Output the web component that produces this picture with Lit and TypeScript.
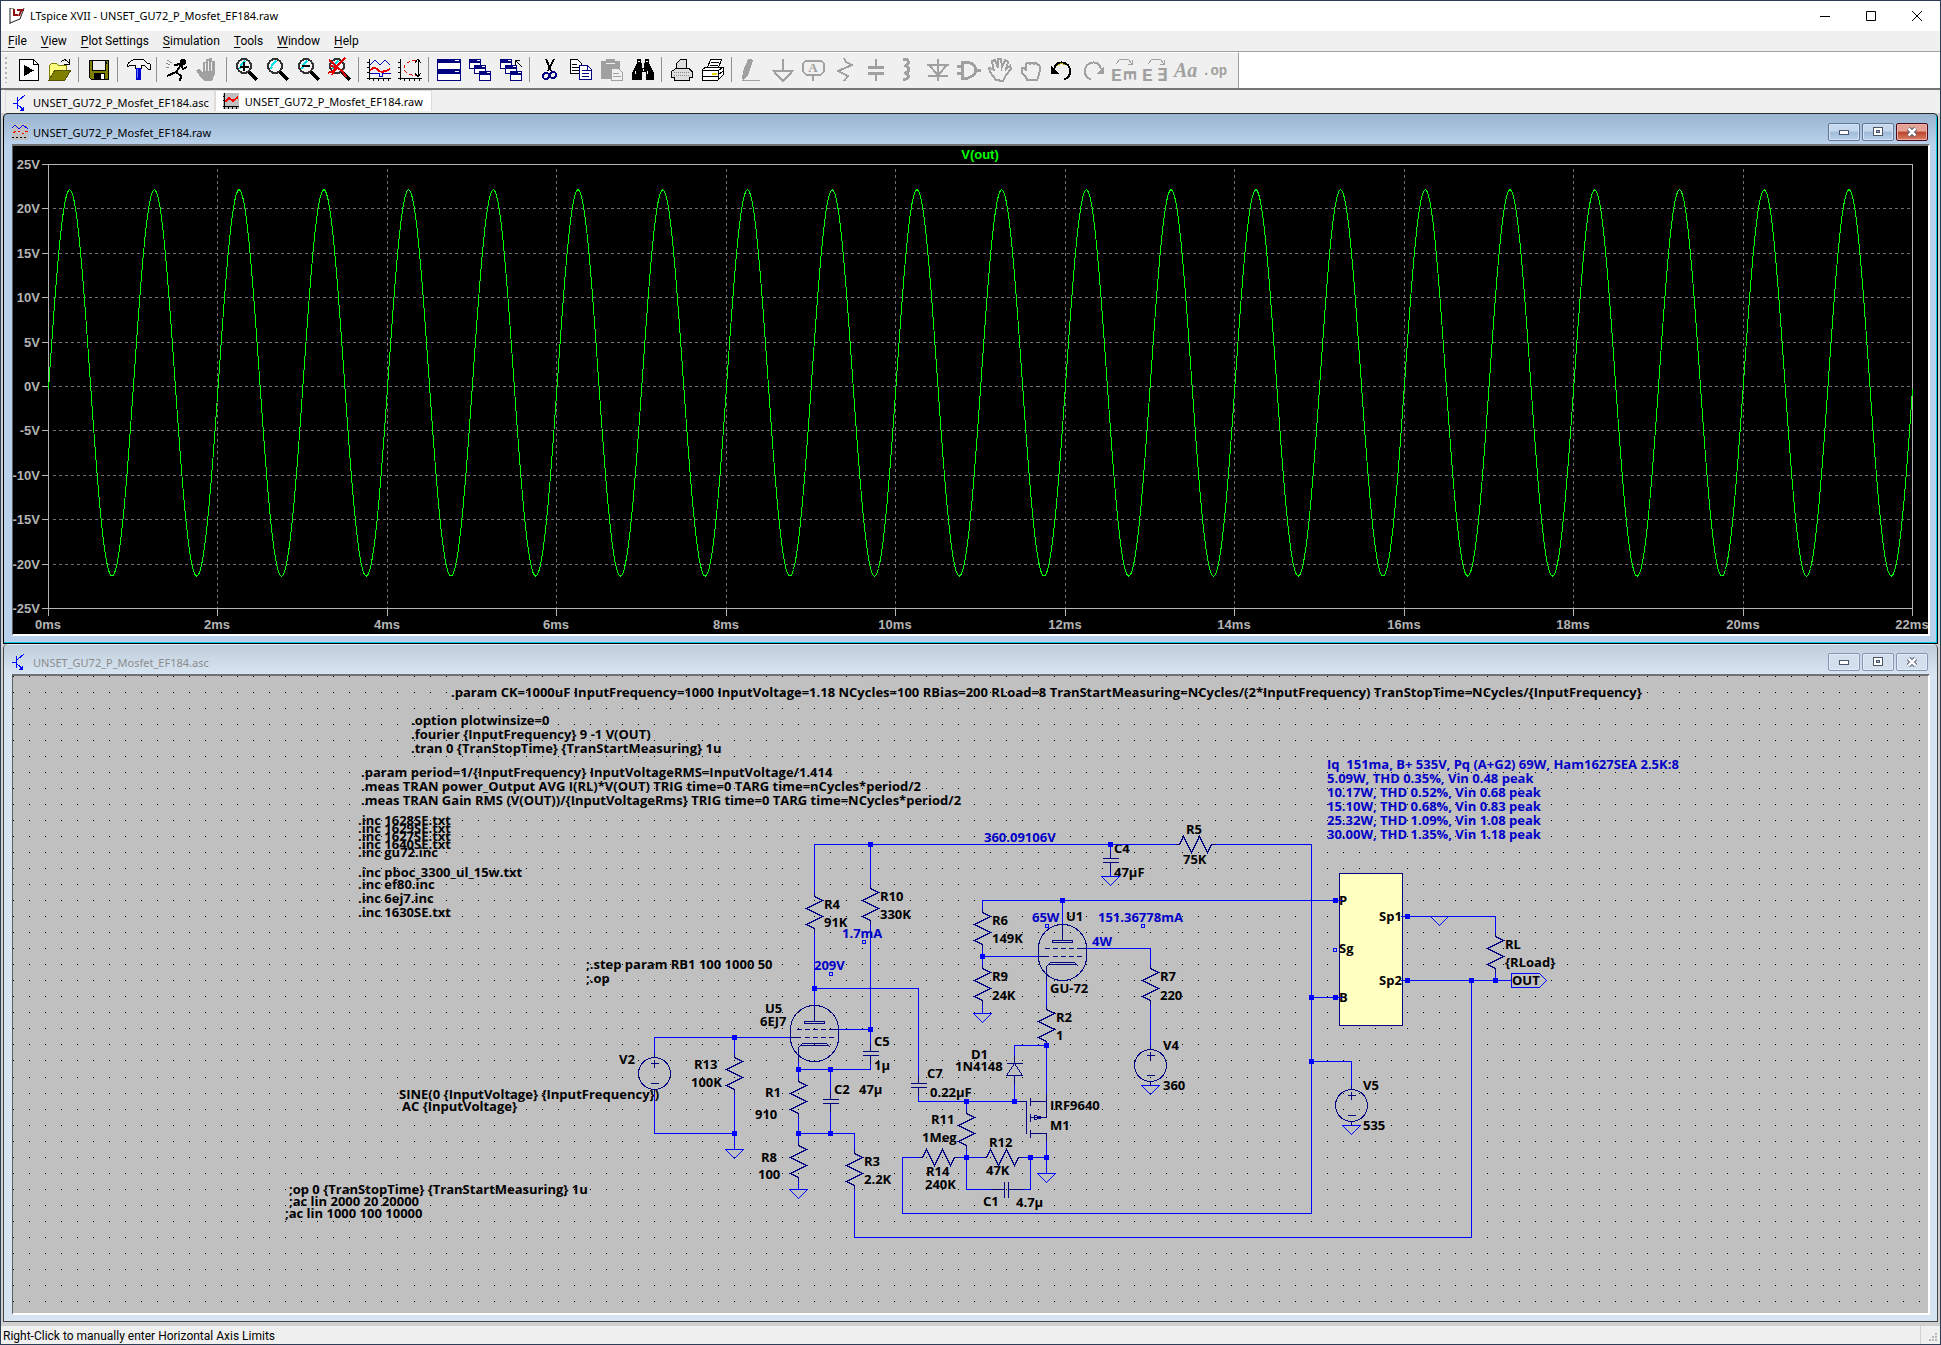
import { LitElement, html, svg, css, nothing, TemplateResult } from "lit";
import { customElement, property, state } from "lit/decorators.js";
import { classMap } from "lit/directives/class-map.js";

type Draw = TemplateResult;

/* ------------------------------------------------------------------ */
/* Icons (24 x 24 grid)                                                */
/* ------------------------------------------------------------------ */

const lens = (inner: Draw) => svg`
  <circle cx="9" cy="8" r="7" fill="#f4f4f4" stroke="#333" stroke-width="2"/>
  <path d="M5 8 L10 3 M4 11 L6 9" stroke="#00e0e8" stroke-width="2"/>
  <path d="M14 14 L22 22" stroke="#000" stroke-width="4"/>${inner}`;

const cascade = svg`
  <path d="M1.5 1.5h11v9h-11z M6.5 7.5h11v8h-11z M11.5 13.5h11v9h-11z" fill="#fff" stroke="#000080"/>
  <path d="M1 1h12v4h-12z M6 7h12v4h-12z M11 13h12v4h-12z" fill="#000080"/>
  <path d="M9 2h3v1h-3z M14 8h3v1h-3z M19 14h3v1h-3z" fill="#fff"/>`;

const G = "#a0a0a0";
const gray = (d: string, w = 2) => svg`<path d=${d} fill="none" stroke=${G} stroke-width=${w}/>`;

const ICONS: Record<string, Draw> = {
  run: svg`<path d="M2.500 1.500h14l5 5v16h-19z" fill="#fff" stroke="#000"/><path d="M16.500 1.500v5h5" fill="none" stroke="#000"/><path d="M7 7v11l10-5.500z"/>`,
  open: svg`<path d="M1.500 21.500v-14l2-2h5l2 2h8v4" fill="#ffff80" stroke="#808000"/><path d="M1 22L7 12H23L17 22z" fill="#808000" stroke="#555500"/><path d="M13 4q4-5 8 1M21 1v5h-5" fill="none" stroke="#000"/>`,
  save: svg`<path d="M2.500 2.500h19v19h-17l-2-2z" fill="#808000" stroke="#000"/><path d="M6 3h12v9H6z" fill="#ececec"/><path d="M5.500 3v9.500h13V3M19.500 4v2" fill="none" stroke="#000"/><path d="M7 15h11v7H7z"/><path d="M14 16h3v5h-3z" fill="#fff"/>`,
  hammer: svg`<path d="M1 7q4-6 11-6 7 0 9 4l3 1v5h-2l-3-3q-2-1-4 0v2H9V7H7Q4 7 1 9z" fill="#f4f4f4" stroke="#000"/><path d="M10 10h5v12h-5z" fill="#0000d0"/><path d="M11 11v9" stroke="#5080ff"/>`,
  runner: svg`<path d="M2 2l5 3M1 5l4 2M1 9l3 1" stroke="#888"/><circle cx="18" cy="4" r="3"/><path d="M9 7l7-1 2 5 4-2M16 7l-5 7-9 4M11 14l5 4-1 5" fill="none" stroke="#000" stroke-width="2"/>`,
  hand: svg`<path d="M7 14V5a1 1 0 0 1 3 0V2a1 1 0 0 1 3 0V1a1 1 0 0 1 3 1v2a1 1 0 0 1 3 1v11l-3 7H8l-5-6-3-5 3-1z" fill=${G}/><path d="M9.500 5v8M12.500 3v10M15.500 4v9" stroke="#f0f0f0"/>`,
  zin: lens(svg`<path d="M9 4v9M4.500 8.500h9" stroke="#000" stroke-width="2"/>`),
  zpan: lens(svg``),
  zout: lens(svg`<path d="M5 8h8" stroke="#000" stroke-width="2"/>`),
  zfit: lens(svg`<path d="M1 2l4 3 4 4 6 5 3 5M17 0L9 8 5 13 0 15M9 9L4 17M2 8l6 1" fill="none" stroke="#e00000" stroke-width="2"/>`),
  plot: svg`<path d="M2.500 1v21M0 4.500h2M0 9.500h2M0 14.500h2M0 20.500h24M6.500 20v3M11.500 20v3M16.500 20v3M21.500 20v3" stroke="#000"/><path d="M3 7l5-5 5 5 5-5 5 5M3 15h9v3h3v-3h9" fill="none" stroke="#0000c0"/><path d="M3 12q5-4 8 0t12-1" fill="none" stroke="#f00000" stroke-width="2"/>`,
  fft: svg`<path d="M2.500 1v21M0 4.500h2M0 9.500h2M0 14.500h2M0 20.500h24M6.500 20v3M11.500 20v3M16.500 20v3M21.500 20v3M20.500 2v17M17 5l3-4 3 4M17 15l3 4 3-4" fill="none" stroke="#000"/><path d="M18 2Q6 4 6 10T18 18" fill="none" stroke="#f00000" stroke-dasharray="4 2"/>`,
  tile: svg`<path d="M.5 1.500h23v21h-23z" fill="#fff" stroke="#000080"/><path d="M0 1h24v4H0zM0 11h24v5H0z" fill="#000080"/><path d="M18 2h4v1h-4zM18 13h4v1h-4z" fill="#fff"/>`,
  cascade,
  closeall: svg`${cascade}<path d="M16 2.500h5M16.500 2v5M16 2l7 7" stroke="#000" stroke-width="1"/>`,
  cut: svg`<path d="M8 1l5 12M16 1L10 13" stroke="#000" stroke-width="2"/><circle cx="8" cy="18" r="3" fill="none" stroke="#000080" stroke-width="2"/><circle cx="15" cy="17" r="3" fill="none" stroke="#000080" stroke-width="2"/>`,
  copy: svg`<path d="M1.500 1.500h7l4 4v10h-11z" fill="#fff" stroke="#000"/><path d="M3 6h5M3 9h7M3 12h7" stroke="#000"/><path d="M10.500 7.500h8l4 4v10h-12z" fill="#fff" stroke="#000080"/><path d="M13 12h5M13 15h7M13 18h7M18.500 8v4h4" fill="none" stroke="#000080"/>`,
  paste: svg`<path d="M1 3h19v18H1zM6 1h9v3H6z" fill=${G}/><path d="M6 5h9" stroke="#f0f0f0"/><path d="M11.500 10.500h7l4 4v8h-11z" fill="#f0f0f0" stroke=${G}/><path d="M13 15h6M13 18h8" stroke=${G}/>`,
  find: svg`<path d="M6 1h4v4h1v5h2V5h1V1h4v4l5 10v7h-8v-8h-4v8H1v-7L6 5z"/><path d="M7 3h2M15 3h2M4 13v3M12 11v2M16 13v3" stroke="#fff"/>`,
  print: svg`<path d="M6.500 11V5.500l4-4h6V11" fill="#ddd" stroke="#000"/><path d="M6 10.500h13l3 3v6h-3v2.500H4V19.500H1.500v-6z" fill="#ddd" stroke="#000"/><path d="M4 14h16M4 17h16" stroke="#888" stroke-dasharray="1 1"/>`,
  setup: svg`<path d="M6 10L10 1h11l-4 9" fill="#fff" stroke="#000"/><path d="M10 4h8M9 7h8" stroke="#000"/><path d="M1 12l4-3h17v8l-5 5H1z" fill="#fff" stroke="#000"/><path d="M1 12.500h16l5-3M17 13v9M1 18.500h16M17 17l5-4" fill="none" stroke="#000"/><path d="M11 16h5" stroke="#e8d800" stroke-width="2"/>`,
  pencil: svg`<path d="M8 1h3l2 2-5 14-5 5-1-1 1-8z" fill=${G}/>${gray("M2 22h18", 1)}`,
  ground: gray("M12 1v12M2 12.500h20L12 23z"),
  label: svg`${gray("M4 2.500h15l3 3v8l-3 3H4l-3-3v-8zM11 17v6")}<text x="11" y="14" text-anchor="middle" font-family="Liberation Serif, serif" font-weight="700" font-size="13" fill=${G}>A</text>`,
  res: gray("M11 0l2 4 6 3-14 6 10 5-4 5"),
  cap: svg`${gray("M12 1v8M12 15v8")}${gray("M4 9.500h16M4 15.500h16", 3)}`,
  ind: gray("M8 1h3q5 3 0 7q6 3 0 7q5 4 0 6H8", 3),
  diode: gray("M12 1v22M1 6.500h22M2 6l10 11L22 6M2 18h20"),
  gate: gray("M0 8h4M0 15h4M18 12h6M5 4h6q8 3 8 8t-8 8H5z", 3),
  drag: gray("M8 22L2 14l-1-4 4 1 1 2L4 3l3-1 3 8V1h3l1 8 3-7 3 2-2 7 4-3 1 3-5 6-3 6z"),
  move: gray("M8 22l-1-3-4-4v-5l3 0 1 3V6q2-3 4 0 2-3 4 0 2-2 4 1 2 0 2 4l-1 6-2 5z"),
  undo: svg`<path d="M4 11Q6 4 12 4.500q8 1 8 9 0 6-6 8" fill="none" stroke="#000" stroke-width="2"/><path d="M7 8q4-4 8-1" fill="none" stroke="#b0a800"/><path d="M1 8v8h8z"/>`,
  redo: svg`<path d="M20 11Q18 4 12 4.500q-8 1-8 9 0 6 6 8" fill="none" stroke=${G} stroke-width="2"/><path d="M23 8v8h-8z" fill=${G}/>`,
  rotate: svg`${gray("M4 6l4-5h8l4 5M20 2v4h-4", 1)}<text x="-1" y="23" font-family="Liberation Mono, monospace" font-weight="700" font-size="18" fill=${G}>E</text><text transform="translate(12 12) rotate(90)" x="0" y="0" font-family="Liberation Mono, monospace" font-weight="700" font-size="18" fill=${G}>E</text>`,
  mirror: svg`${gray("M5 6l4-5h8l4 5M21 2v4h-4", 1)}<text x="-1" y="23" font-family="Liberation Mono, monospace" font-weight="700" font-size="18" fill=${G}>E</text><text x="14" y="23" font-family="Liberation Mono, monospace" font-weight="700" font-size="18" fill=${G}>∃</text>`,
  text: svg`<text x="0" y="19" font-family="Liberation Serif, serif" font-weight="700" font-style="italic" font-size="20" fill=${G}>Aa</text>`,
  op: svg`<text x="-3" y="17" font-family="Liberation Mono, monospace" font-weight="700" font-size="14" fill=${G}>.op</text>`,
};

const TRANSISTOR = svg`<path d="M0 8h4M4.500 2v12M5 6l7-6M5 10l6 5" fill="none" stroke="#0000ff" stroke-width="1"/><path d="M11 11v5H6z" fill="#0000ff"/>`;
const TRACE = svg`<path d="M0 0h16v16H0z" fill="#c0c0c0"/><path d="M1.500 0v16M0 13.500h16M5.500 13v3M9.500 13v3M13.500 13v3M0 3.500h2M0 7.500h2" stroke="#000"/><path d="M2 9l4-4 4 3 5-4" fill="none" stroke="#ff0000" stroke-width="2"/>`;
const WAVES = svg`<path d="M0 0h16v16H0z" fill="#c0c0c0"/><path d="M0 4l3-3 4 4 4-4 5 4" fill="none" stroke="#0000ff"/><path d="M1 9l3-2M6 7h2M10 9h2M13 7h3" stroke="#ff0000"/><path d="M0 13.500h16" stroke="#000" stroke-dasharray="2 2"/>`;

/* ------------------------------------------------------------------ */
/* Waveform                                                            */
/* ------------------------------------------------------------------ */

@customElement("wave-plot")
class WavePlot extends LitElement {
  static styles = css`
    :host { display: block; flex: 1; min-width: 0; min-height: 0; background: #000; overflow: hidden; }
    svg { display: block; width: 100%; height: 100%; }
    text { font: bold 13px "Liberation Sans", Arial, sans-serif; fill: #b4b4b4; }
    .title { fill: #00ff00; }
    .axis { fill: none; stroke: #b4b4b4; shape-rendering: crispEdges; }
    .grid { fill: none; stroke: #707070; stroke-dasharray: 3 3; shape-rendering: crispEdges; }
    .trace { fill: none; stroke: #00ff00; shape-rendering: crispEdges; }
  `;
  @state() private w = 1915;
  @state() private h = 488;
  private ro?: ResizeObserver;

  connectedCallback() {
    super.connectedCallback();
    this.ro = new ResizeObserver(([e]) => {
      this.w = Math.round(e.contentRect.width);
      this.h = Math.round(e.contentRect.height);
    });
    this.ro.observe(this);
  }
  disconnectedCallback() {
    super.disconnectedCallback();
    this.ro?.disconnect();
  }

  render() {
    const left = 35, top = 18, right = this.w - 16, bottom = this.h - 26;
    const X = (ms: number) => left + ((right - left) * ms) / 22;
    const Y = (v: number) => top + ((bottom - top) * (25 - v)) / 50;
    const volts = [25, 20, 15, 10, 5, 0, -5, -10, -15, -20, -25];
    const times = Array.from({ length: 12 }, (_, i) => i * 2);
    let d = "";
    for (let x = left; x <= right; x++) {
      const t = ((x - left) / (right - left)) * 22 * 2 * Math.PI;
      d += `${d ? "L" : "M"}${x} ${Y(21.75 * Math.sin(t) + 0.05 - 0.35 * Math.cos(2 * t)).toFixed(1)}`;
    }
    const r = Math.round;
    return html`<svg role="img" aria-label="V(out)">
      <text class="title" x=${r((left + right) / 2)} y="13" text-anchor="middle">V(out)</text>
      <g transform="translate(.5 .5)">
        <path class="grid" d=${volts.slice(1, -1).map((v) => `M${left + 4} ${r(Y(v))}H${right}`).join("") +
          times.slice(1, -1).map((t) => `M${r(X(t))} ${top + 4}V${bottom}`).join("")} />
        <path class="axis" d=${`M${left} ${top}H${right}V${bottom}H${left}Z` +
          volts.map((v) => `M${left - 7} ${r(Y(v))}h7`).join("") +
          times.map((t) => `M${r(X(t))} ${bottom}v7`).join("")} />
        <path class="trace" d=${d} />
      </g>
      ${volts.map((v) => svg`<text x=${left - 8} y=${r(Y(v)) + 5} text-anchor="end">${v}V</text>`)}
      ${times.map((t) => svg`<text x=${r(X(t))} y=${bottom + 21} text-anchor="middle">${t}ms</text>`)}
    </svg>`;
  }
}

/* ------------------------------------------------------------------ */
/* Schematic                                                           */
/* ------------------------------------------------------------------ */

const WIRES = [
  "M814 896V844H1179", "M1211 844H1311V1213H902V1157H922", "M870 844V888", "M870 920V1051",
  "M814 928V1005", "M814 988H918V1083", "M654 1057V1037H790", "M654 1089V1133H734", "M734 1037V1057", "M734 1089V1149",
  "M838 1029H870", "M870 1055V1069H798", "M798 1060V1081", "M830 1069V1099", "M830 1103V1133",
  "M798 1113V1145", "M798 1133H854V1153", "M798 1177V1189", "M854 1185V1237H1471V980",
  "M918 1087V1101H1026", "M966 1101V1113", "M966 1145V1189H1004", "M954 1157H986", "M1018 1157H1046", "M1030 1157V1189H1008",
  "M1046 1133V1173", "M1046 1117V1041", "M1014 1063V1045H1046", "M1014 1075V1101", "M1046 979V1009",
  "M982 912V900H1335", "M1062 900V924", "M982 944V968", "M982 956H1038", "M982 1000V1013",
  "M1086 948H1150V968", "M1150 1000V1049", "M1110 844V858", "M1110 862V876",
  "M1311 997H1342", "M1311 1061H1351V1089", "M1335 900H1342",
  "M1400 916H1495V936", "M1400 980H1511", "M1495 968V980",
  "M1511 973H1539L1546 980L1539 987H1511Z",
].join("");

const JUNCTIONS: [number, number][] = [
  [870, 844], [814, 988], [870, 1029], [734, 1037], [734, 1133], [798, 1069], [830, 1069], [798, 1133], [830, 1133],
  [966, 1101], [1014, 1101], [966, 1157], [1030, 1157], [1046, 1157], [1046, 1045], [982, 956], [1062, 900], [1110, 844],
  [1311, 997], [1335, 997], [1311, 1061], [1335, 900], [1407, 916], [1407, 980], [1471, 980], [1495, 980],
];
const PROBES: [number, number][] = [[862, 940], [829, 972], [1045, 924], [1141, 924], [1333, 948]];
const GROUNDS: [number, number][] = [
  [734, 1149], [798, 1189], [982, 1013], [1046, 1173], [1110, 876], [1150, 1085], [1351, 1125], [1439, 916],
];
const RES_V: [number, number][] = [
  [814, 896], [870, 888], [734, 1057], [798, 1081], [798, 1145], [854, 1153], [966, 1113], [982, 912], [982, 968],
  [1046, 1009], [1150, 968], [1495, 936],
];
const RES_H: [number, number][] = [[1179, 844], [922, 1157], [986, 1157]];
const CAP_V: [number, number][] = [[870, 1051], [830, 1099], [918, 1083], [1110, 858]];
const SOURCES: [number, number][] = [[654, 1073], [1150, 1065], [1351, 1105]];
const TUBES: [number, number][] = [[814, 1033], [1062, 952]];

const NOTES: [number, number, string][] = [
  [451, 697, ".param CK=1000uF InputFrequency=1000 InputVoltage=1.18 NCycles=100 RBias=200 RLoad=8 TranStartMeasuring=NCycles/(2*InputFrequency) TranStopTime=NCycles/{InputFrequency}"],
  [411, 725, ".option plotwinsize=0"], [411, 739, ".fourier {InputFrequency} 9 -1 V(OUT)"],
  [411, 753, ".tran 0 {TranStopTime} {TranStartMeasuring} 1u"],
  [361, 777, ".param period=1/{InputFrequency} InputVoltageRMS=InputVoltage/1.414"],
  [361, 791, ".meas TRAN power_Output AVG I(RL)*V(OUT) TRIG time=0 TARG time=nCycles*period/2"],
  [361, 805, ".meas TRAN Gain RMS (V(OUT))/{InputVoltageRms} TRIG time=0 TARG time=NCycles*period/2"],
  [358, 825, ".inc 1628SE.txt"], [358, 833, ".inc 1629SE.txt"], [358, 841, ".inc 1627SE.txt"], [358, 849, ".inc 1640SE.txt"],
  [358, 857, ".inc gu72.inc"], [358, 877, ".inc pboc_3300_ul_15w.txt"], [358, 889, ".inc ef80.inc"],
  [358, 903, ".inc 6ej7.inc"], [358, 917, ".inc 1630SE.txt"],
  [586, 969, ";.step param RB1 100 1000 50"], [586, 983, ";.op"],
  [399, 1099, "SINE(0 {InputVoltage} {InputFrequency})"], [402, 1111, "AC {InputVoltage}"],
  [289, 1194, ";op 0 {TranStopTime} {TranStartMeasuring} 1u"], [289, 1206, ";ac lin 2000 20 20000"], [285, 1218, ";ac lin 1000 100 10000"],
  [765, 1013, "U5"], [760, 1026, "6EJ7"], [619, 1064, "V2"], [694, 1069, "R13"], [691, 1087, "100K"],
  [824, 909, "R4"], [824, 927, "91K"], [880, 901, "R10"], [880, 919, "330K"], [874, 1046, "C5"], [874, 1070, "1µ"],
  [834, 1094, "C2"], [859, 1094, "47µ"], [765, 1097, "R1"], [755, 1119, "910"], [761, 1162, "R8"], [758, 1179, "100"],
  [864, 1166, "R3"], [864, 1184, "2.2K"], [927, 1078, "C7"], [930, 1097, "0.22µF"], [971, 1059, "D1"], [955, 1071, "1N4148"],
  [931, 1124, "R11"], [922, 1142, "1Meg"], [926, 1176, "R14"], [925, 1189, "240K"], [983, 1206, "C1"], [1016, 1207, "4.7µ"],
  [1186, 834, "R5"], [1183, 864, "75K"], [1114, 853, "C4"], [1114, 877, "47µF"], [992, 925, "R6"], [992, 943, "149K"],
  [1066, 921, "U1"], [992, 981, "R9"], [992, 1000, "24K"], [1050, 993, "GU-72"], [1160, 981, "R7"], [1160, 1000, "220"],
  [1056, 1022, "R2"], [1056, 1040, "1"], [1163, 1050, "V4"], [1163, 1090, "360"], [1050, 1110, "IRF9640"], [1050, 1130, "M1"],
  [989, 1147, "R12"], [986, 1175, "47K"], [1505, 949, "RL"], [1505, 967, "{RLoad}"], [1363, 1090, "V5"], [1363, 1130, "535"],
  [1339, 905, "P"], [1339, 953, "Sg"], [1339, 1002, "B"], [1379, 921, "Sp1"], [1379, 985, "Sp2"], [1512, 985, "OUT"],
];
const READOUTS: [number, number, string][] = [
  [842, 938, "1.7mA"], [814, 970, "209V"], [984, 842, "360.09106V"], [1032, 922, "65W"], [1098, 922, "151.36778mA"], [1092, 946, "4W"],
  [1327, 769, "Iq\u00a0 151ma, B+ 535V, Pq (A+G2) 69W, Ham1627SEA 2.5K:8"],
  [1327, 783, "5.09W, THD 0.35%, Vin 0.48 peak"], [1327, 797, "10.17W, THD 0.52%, Vin 0.68 peak"],
  [1327, 811, "15.10W, THD 0.68%, Vin 0.83 peak"], [1327, 825, "25.32W, THD 1.09%, Vin 1.08 peak"],
  [1327, 839, "30.00W, THD 1.35%, Vin 1.18 peak"],
];

const GRID_DOTS = (() => {
  let d = "";
  for (let j = 0; j < 80; j++)
    for (let i = 0; i < 200; i++) d += `M${13 + Math.round(i * 16.02)} ${676 + Math.round(j * 16.02)}h1v1h-1z`;
  return d;
})();

const SYMBOLS = [
  ...RES_V.map(([x, y]) => `M${x} ${y - 4}v4l8 4l-16 8l16 8l-16 8l8 4v4`),
  ...RES_H.map(([x, y]) => `M${x - 4} ${y}h4l4 -8l8 16l8 -16l8 16l4 -8h4`),
  ...CAP_V.map(([x, y]) => `M${x - 8} ${y}h16M${x - 8} ${y + 4}h16M${x} ${y}v-8M${x} ${y + 4}v8`),
  ...SOURCES.map(([x, y]) => `M${x - 4} ${y - 10}h8M${x} ${y - 14}v8M${x - 4} ${y + 10}h8M${x} ${y - 20}v4M${x} ${y + 16}v4`),
  ...TUBES.map(([x, y]) =>
    `M${x} ${y - 28}v16M${x - 10} ${y - 12}h20v2h-20zM${x - 16} ${y + 28}v-14l4 -4h24l4 4M${x - 15} ${y + 12}h29` +
    [-18, -10, -2, 6].map((o) => `M${x + o} ${y - 4}h5`).join("") + `M${x + 14} ${y - 4}h10` +
    `M${x - 24} ${y + 4}h10` + [-10, -2, 6, 14].map((o) => `M${x + o} ${y + 4}h5`).join("")),
  "M1004 1181v16M1008 1181v16M990 1189h14M1008 1189h14",
  "M1006 1063h16M1014 1063l8 12h-16zM1014 1055v8M1014 1075v8",
  "M1018 1101h8v32M1030 1097v8M1030 1113v8M1030 1129v8M1030 1101h16v-8M1030 1117h16v-16M1030 1133h16v8M1034 1115v4M1034 1115l9 2l-9 2",
].join("");

@customElement("schematic-sheet")
class SchematicSheet extends LitElement {
  static styles = css`
    :host { display: block; flex: 1; min-width: 0; min-height: 0; background: #c0c0c0; overflow: hidden; }
    svg { display: block; width: 100%; height: 100%; }
    text { font: bold 13px "Open Sans", "Noto Sans", sans-serif; fill: #000; }
    .readout { fill: #0000c8; }
    .line { fill: none; shape-rendering: crispEdges; }
    .wire { stroke: #0000ff; }
    .part { stroke: #000080; }
    .body { fill: #ffffc0; stroke: #000080; shape-rendering: crispEdges; }
    .node { fill: #0000ff; shape-rendering: crispEdges; }
  `;
  render() {
    const label = (c: string) => ([x, y, s]: [number, number, string]) => svg`<text class=${c} x=${x} y=${y}>${s}</text>`;
    return html`<svg role="img" aria-label="Amplifier schematic">
      <g transform="translate(-13 -676)">
        <path d=${GRID_DOTS} shape-rendering="crispEdges" />
        <g transform="translate(.5 .5)">
          <rect class="body" x="1339" y="873" width="63" height="152" />
        </g>
        ${NOTES.map(label("note"))}
        <g transform="translate(.5 .5)">
          <path class="line wire" d=${WIRES} />
          <path class="line wire" d=${GROUNDS.map(([x, y]) => `M${x - 9} ${y}h18l-9 9z`).join("")} />
          <path class="line part" d=${SYMBOLS} />
          ${SOURCES.map(([x, y]) => svg`<circle class="line part" cx=${x} cy=${y} r="16"/>`)}
          ${TUBES.map(([x, y]) => svg`<rect class="line part" x=${x - 24} y=${y - 28} width="48" height="56" rx="24"/>`)}
          <path class="line wire" d=${PROBES.map(([x, y]) => `M${x} ${y}h3v3h-3z`).join("")} />
        </g>
        <path class="node" d=${JUNCTIONS.map(([x, y]) => `M${x - 2} ${y - 2}h5v5h-5z`).join("")} />
        ${READOUTS.map(label("readout"))}
      </g>
    </svg>`;
  }
}

/* ------------------------------------------------------------------ */
/* Document window                                                     */
/* ------------------------------------------------------------------ */

@customElement("doc-window")
class DocWindow extends LitElement {
  @property() caption = "";
  @property({ type: Boolean, reflect: true }) active = false;
  @property({ attribute: false }) icon: Draw = svg``;
  static styles = css`
    :host {
      display: flex; flex-direction: column; min-height: 0; box-sizing: border-box;
      padding: 0 7px 6px 8px; border: 1px solid #444; border-top: 0; border-radius: 5px 5px 0 0;
      background: linear-gradient(#bfcddb, #d7e4f2 30px);
      box-shadow: inset 0 1px #e8eef4;
    }
    :host([active]) {
      border-color: #000; border-top: 1px solid #2a2a2a;
      background: linear-gradient(#99b4d1, #b9d1ea 30px);
      box-shadow: inset -1px -1px #00c8e8; padding: 0 7px 7px 8px;
    }
    .bar { flex: none; height: 30px; display: flex; align-items: center; gap: 5px; box-sizing: border-box; padding: 6px 2px 0 0; }
    .icon { width: 16px; height: 16px; flex: none; shape-rendering: crispEdges; }
    .caption { flex: 1; margin: 0; font: 400 11px "Noto Sans", "Open Sans", sans-serif; color: #8c8c8c; }
    :host([active]) .caption { color: #000; }
    .buttons { display: flex; gap: 2px; }
    button {
      width: 32px; height: 18px; padding: 0; display: grid; place-items: center;
      border: 1px solid #8496b4; border-radius: 2px; background: #d3dfec; box-shadow: inset 0 0 0 1px #e4ecf6;
    }
    :host([active]) button { border-color: #5f7694; background: linear-gradient(#c5d8ee 45%, #9fbad8 50%, #b8d2ec); box-shadow: inset 0 0 0 1px #d4e4f4; }
    :host([active]) .close { border-color: #4a0a1c; background: linear-gradient(#e4a296 45%, #bc4028 50%, #d88068); box-shadow: inset 0 0 0 1px #eab0a4; }
    .frame { flex: 1; min-height: 0; display: flex; border: 2px solid #fff; border-top-color: #707070; border-left: 1px solid #606060; }
    ::slotted(*) { flex: 1; min-width: 0; }
  `;
  render() {
    return html`
      <div class="bar">
        <svg class="icon" viewBox="0 0 16 16" aria-hidden="true">${this.icon}</svg>
        <h2 class="caption">${this.caption}</h2>
        <div class="buttons">
          <button aria-label="Minimize"><svg width="12" height="8"><rect x="1.500" y="2.500" width="9" height="4" fill="#fff" stroke="#4a5568"/></svg></button>
          <button aria-label="Restore"><svg width="12" height="10"><rect x="1.500" y=".5" width="9" height="8" fill="#fff" stroke="#4a5568"/><rect x="4.500" y="3.500" width="3" height="2" fill="#9fb4cc" stroke="#4a5568"/></svg></button>
          <button class="close" aria-label="Close"><svg width="12" height="10"><path d="M2.500 1.500l7 7M9.500 1.500l-7 7" stroke="#4a5568" stroke-width="4.500"/><path d="M2.500 1.500l7 7M9.500 1.500l-7 7" stroke="#fff" stroke-width="2.500"/></svg></button>
        </div>
      </div>
      <div class="frame"><slot></slot></div>`;
  }
}

/* ------------------------------------------------------------------ */
/* Application shell                                                   */
/* ------------------------------------------------------------------ */

const TOOLS: [string, string, boolean?][][] = [
  [["run", "Run"], ["open", "Open"]],
  [["save", "Save"]],
  [["hammer", "Control Panel"]],
  [["runner", "Run simulation"], ["hand", "Halt", true]],
  [["zin", "Zoom in"], ["zpan", "Pan"], ["zout", "Zoom out"], ["zfit", "Zoom to fit"]],
  [["plot", "Autorange"], ["fft", "FFT"]],
  [["tile", "Tile windows"], ["cascade", "Cascade windows"], ["closeall", "Close all"]],
  [["cut", "Cut"], ["copy", "Copy"], ["paste", "Paste", true], ["find", "Find"]],
  [["print", "Print"], ["setup", "Print setup"]],
  [
    ["pencil", "Wire", true], ["ground", "Ground", true], ["label", "Label net", true], ["res", "Resistor", true],
    ["cap", "Capacitor", true], ["ind", "Inductor", true], ["diode", "Diode", true], ["gate", "Component", true],
    ["drag", "Move", true], ["move", "Drag", true], ["undo", "Undo"], ["redo", "Redo", true], ["rotate", "Rotate", true],
    ["mirror", "Mirror", true], ["text", "Text", true], ["op", "SPICE directive", true],
  ],
];
const MENUS = ["File", "View", "Plot Settings", "Simulation", "Tools", "Window", "Help"];

@customElement("app-root")
class AppRoot extends LitElement {
  @state() private tab = 1;
  static styles = css`
    :host { display: block; font: 400 11px "Noto Sans", "Open Sans", sans-serif; color: #000; }
    .app { height: 100vh; box-sizing: border-box; display: flex; flex-direction: column; background: #f0f0f0; border: 1px solid #2c3e56; }
    button { font: inherit; color: inherit; border: 0; background: none; padding: 0; }
    .titlebar { flex: none; height: 30px; display: flex; align-items: center; background: #fff; padding-left: 8px; gap: 5px; }
    .titlebar h1 { flex: 1; margin: 0; padding-bottom: 2px; font: inherit; }
    .logo { width: 16px; height: 16px; }
    .sys { display: flex; height: 100%; padding-bottom: 1px; box-sizing: border-box; }
    .sys button { width: 46px; display: grid; place-items: center; }
    .menubar { flex: none; height: 20px; display: flex; align-items: center; border-bottom: 1px solid #a0a0a0; font: 400 12px Roboto, sans-serif; }
    .menubar button { padding: 0 7px; line-height: 20px; }
    .mn { text-decoration: underline; text-underline-offset: 2px; }
    .dock { flex: none; display: flex; background: #fff; border-bottom: 2px solid #757575; }
    .toolbar { height: 36px; display: flex; align-items: center; background: #f0f0f0; border-right: 1px solid #a0a0a0; padding: 0 6px 2px 4px; border-top: 1px solid #fff; box-sizing: border-box; }
    .grip { width: 2px; height: 26px; margin-right: 6px; background: repeating-linear-gradient(#b4b4b4 0 2px, transparent 2px 5px); }
    .group { display: flex; }
    .group + .group { border-left: 1px solid #909090; margin-left: 3px; padding-left: 4px; height: 25px; align-items: center; }
    .tool { width: 31px; height: 28px; display: grid; place-items: center; }
    .tool svg { width: 24px; height: 24px; shape-rendering: crispEdges; overflow: visible; }
    .tabs { flex: none; height: 23px; display: flex; align-items: flex-start; padding-left: 4px; box-sizing: border-box; }
    .tab { height: 21px; display: flex; align-items: center; gap: 4px; padding: 3px 5px 0 7px; border: 1px solid #dcdcdc; border-bottom: 0; box-sizing: border-box; }
    .tab.on { background: #fff; padding: 0 8px 0 7px; gap: 6px; }
    .tab svg { width: 16px; height: 16px; shape-rendering: crispEdges; }
    .workspace { flex: 1; min-height: 0; display: flex; flex-direction: column; padding: 0 2px 3px 2px; background: #d0d0d0; }
    .upper { flex: 522 1 0; }
    .lower { flex: 671 1 0; }
    .status { flex: none; height: 19px; display: flex; align-items: stretch; border-top: 1px solid #d0d0d0; box-sizing: border-box; font: 400 12px Roboto, sans-serif; }
    .status p { margin: 0; flex: 1; line-height: 20px; padding-left: 2px; border-right: 1px solid #d0d0d0; }
    .status svg { width: 19px; height: 18px; }
  `;

  render() {
    const tabs: [string, Draw][] = [["UNSET_GU72_P_Mosfet_EF184.asc", TRANSISTOR], ["UNSET_GU72_P_Mosfet_EF184.raw", TRACE]];
    return html`<div class="app">
      <header class="titlebar">
        <svg class="logo" viewBox="0 0 16 16" aria-hidden="true"><path d="M1 0v16M1 0h4M15 0L11 11 1 15" fill="none" stroke="#222"/><path d="M4 1h2v5h3v2H4zM8 1h7v2h-2l-2 5H9l2-5H8z" fill="#901010"/></svg>
        <h1>LTspice XVII - UNSET_GU72_P_Mosfet_EF184.raw</h1>
        <div class="sys">
          <button aria-label="Minimize"><svg width="10" height="10"><path d="M0 5.500h10" stroke="#000"/></svg></button>
          <button aria-label="Maximize"><svg width="10" height="10"><path d="M.5.5h9v9h-9z" fill="none" stroke="#000"/></svg></button>
          <button aria-label="Close"><svg width="10" height="10"><path d="M0 0l10 10M10 0L0 10" stroke="#000"/></svg></button>
        </div>
      </header>
      <nav class="menubar">
        ${MENUS.map((m) => html`<button><span class="mn">${m[0]}</span>${m.slice(1)}</button>`)}
      </nav>
      <div class="dock">
        <div class="toolbar" role="toolbar">
          <span class="grip"></span>
          ${TOOLS.map((g) => html`<div class="group">${g.map(([id, name, off]) => html`
            <button class="tool" aria-label=${name} title=${name} ?disabled=${!!off}><svg viewBox="0 0 24 24" fill="#000">${ICONS[id] ?? nothing}</svg></button>`)}</div>`)}
        </div>
      </div>
      <div class="tabs" role="tablist">
        ${tabs.map(([name, icon], i) => html`<button role="tab" aria-selected=${i === this.tab ? "true" : "false"}
          class=${classMap({ tab: true, on: i === this.tab })} @click=${() => (this.tab = i)}>
          <svg viewBox="0 0 16 16" aria-hidden="true">${icon}</svg>${name}</button>`)}
      </div>
      <main class="workspace">
        <doc-window class="upper" active caption="UNSET_GU72_P_Mosfet_EF184.raw" .icon=${WAVES}><wave-plot></wave-plot></doc-window>
        <doc-window class="lower" caption="UNSET_GU72_P_Mosfet_EF184.asc" .icon=${TRANSISTOR}><schematic-sheet></schematic-sheet></doc-window>
      </main>
      <footer class="status">
        <p>Right-Click to manually enter Horizontal Axis Limits</p>
        <svg aria-hidden="true"><path d="M14 7h2v2h-2zM11 10h2v2h-2zM14 10h2v2h-2zM8 13h2v2h-2zM11 13h2v2h-2zM14 13h2v2h-2z" fill="#b8b8b8"/></svg>
      </footer>
    </div>`;
  }
}
